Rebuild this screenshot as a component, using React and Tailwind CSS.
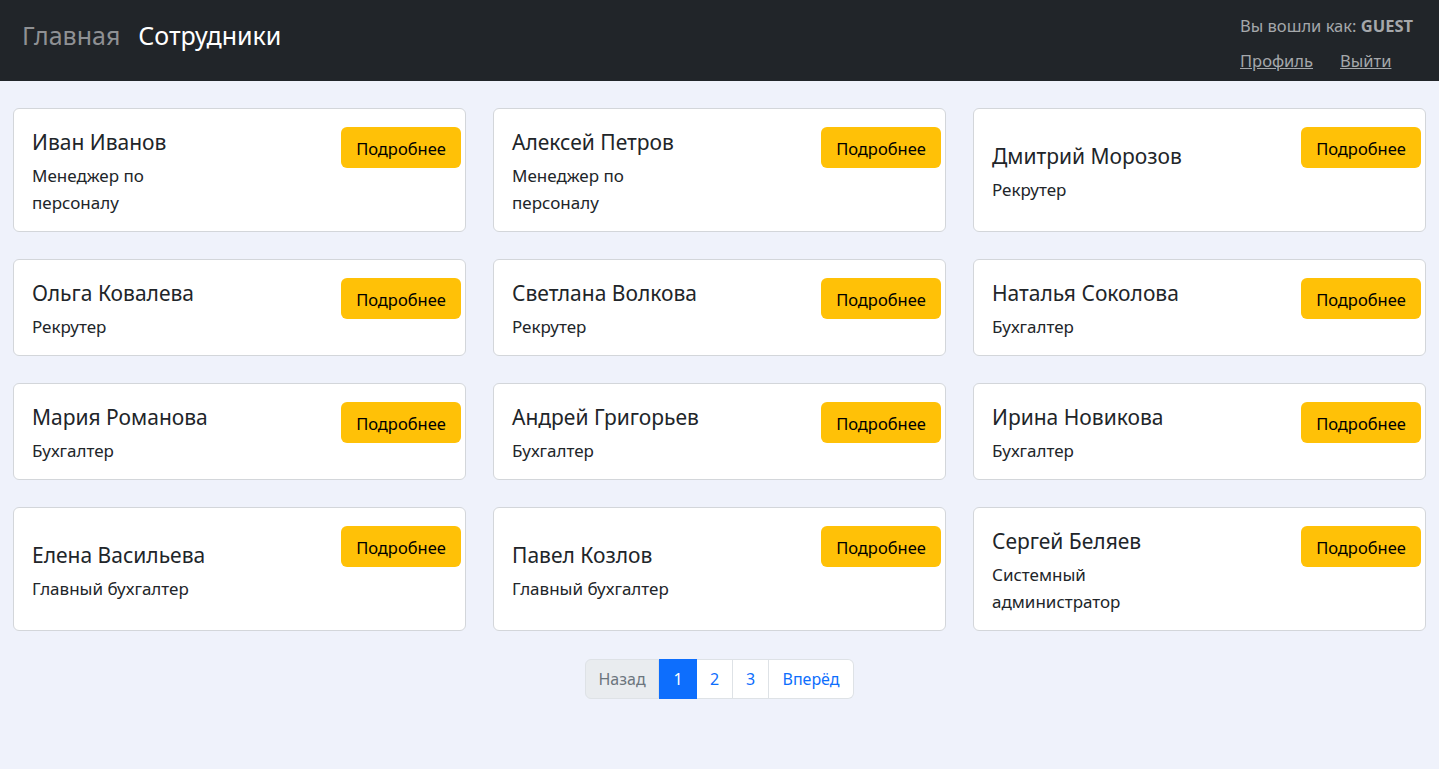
const employees = [
  { name: 'Иван Иванов', role: 'Менеджер по персоналу' },
  { name: 'Алексей Петров', role: 'Менеджер по персоналу' },
  { name: 'Дмитрий Морозов', role: 'Рекрутер' },
  { name: 'Ольга Ковалева', role: 'Рекрутер' },
  { name: 'Светлана Волкова', role: 'Рекрутер' },
  { name: 'Наталья Соколова', role: 'Бухгалтер' },
  { name: 'Мария Романова', role: 'Бухгалтер' },
  { name: 'Андрей Григорьев', role: 'Бухгалтер' },
  { name: 'Ирина Новикова', role: 'Бухгалтер' },
  { name: 'Елена Васильева', role: 'Главный бухгалтер' },
  { name: 'Павел Козлов', role: 'Главный бухгалтер' },
  { name: 'Сергей Беляев', role: 'Системный администратор' },
]

function EmployeeCard({ employee }) {
  return (
    <div className="flex justify-between bg-white border border-[#d3d6da] rounded-md pl-[18px] pr-[4px] py-[18px]">
      <div className="self-center translate-y-[3px]">
        <h5 className="text-[21px] leading-[24px] text-[#212529] mb-2 whitespace-nowrap">{employee.name}</h5>
        <p className="w-[180px] text-[17px] leading-[27px] text-[#212529]">{employee.role}</p>
      </div>
      <button className="self-start w-[120px] h-[41px] pt-[3px] bg-[#ffc107] rounded-md text-[16.5px] text-black">
        Подробнее
      </button>
    </div>
  )
}

export default function App() {
  return (
    <div className="min-h-[769px] bg-[#eff2fb] font-['Noto_Sans',sans-serif]">
      <nav className="h-[81px] bg-[#212529] flex justify-between pl-[22px] pr-[26px]">
        <div className="flex items-center gap-[18px] text-[25px] pb-[10px]">
          <a className="text-[#8f9194]">Главная</a>
          <a className="text-white">Сотрудники</a>
        </div>
        <div className="flex flex-col items-start pt-[14px] text-[16.5px] text-[#a5a8ab]">
          <span>
            Вы вошли как: <b className="font-bold">GUEST</b>
          </span>
          <div className="flex gap-[27px] mt-[10px]">
            <a className="underline">Профиль</a>
            <a className="underline">Выйти</a>
          </div>
        </div>
      </nav>

      <main className="px-[13px] pt-[27px]">
        <div className="grid grid-cols-3 gap-[27px]">
          {employees.map((e) => (
            <EmployeeCard key={e.name} employee={e} />
          ))}
        </div>

        <div className="flex justify-center mt-[28px]">
          <div className="flex text-[16px] leading-[24px] text-center">
            <span className="w-[74px] py-[7px] bg-[#e9ecef] text-[#6c757d] border border-[#dee2e6] rounded-l-md">
              Назад
            </span>
            <span className="w-[38px] py-[7px] bg-[#0d6efd] text-white border border-[#0d6efd]">1</span>
            <span className="w-[36px] py-[7px] bg-white text-[#0d6efd] border border-l-0 border-[#dee2e6]">2</span>
            <span className="w-[36px] py-[7px] bg-white text-[#0d6efd] border border-l-0 border-[#dee2e6]">3</span>
            <span className="w-[85px] py-[7px] bg-white text-[#0d6efd] border border-l-0 border-[#dee2e6] rounded-r-md">
              Вперёд
            </span>
          </div>
        </div>
      </main>
    </div>
  )
}
